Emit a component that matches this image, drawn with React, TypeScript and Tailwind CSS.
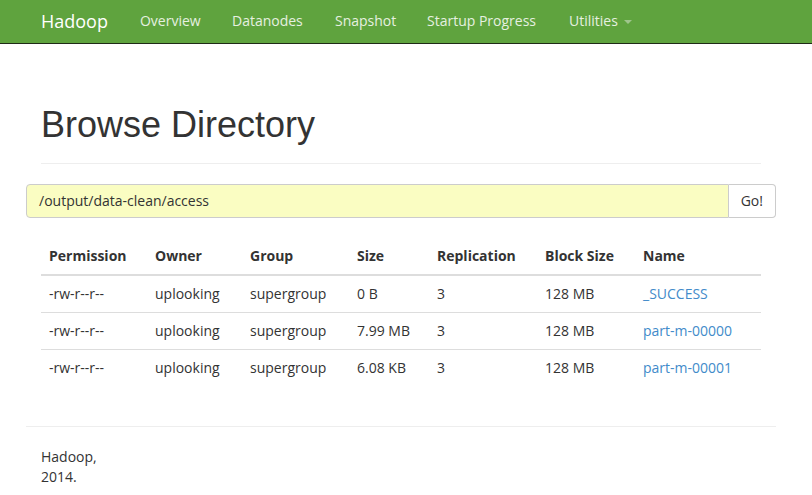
import React from 'react';

const rows = [
  { perm: '-rw-r--r--', owner: 'uplooking', group: 'supergroup', size: '0 B', repl: '3', block: '128 MB', name: '_SUCCESS' },
  { perm: '-rw-r--r--', owner: 'uplooking', group: 'supergroup', size: '7.99 MB', repl: '3', block: '128 MB', name: 'part-m-00000' },
  { perm: '-rw-r--r--', owner: 'uplooking', group: 'supergroup', size: '6.08 KB', repl: '3', block: '128 MB', name: 'part-m-00001' },
];

const headers = [
  { label: 'Permission', w: 'w-[106px]' },
  { label: 'Owner', w: 'w-[95px]' },
  { label: 'Group', w: 'w-[107px]' },
  { label: 'Size', w: 'w-[80px]' },
  { label: 'Replication', w: 'w-[108px]' },
  { label: 'Block Size', w: 'w-[98px]' },
  { label: 'Name', w: '' },
];

const navLinks = [
  { label: 'Overview', w: 'w-[92px]' },
  { label: 'Datanodes', w: 'w-[103px]' },
  { label: 'Snapshot', w: 'w-[92px]' },
  { label: 'Startup Progress', w: 'w-[142px]' },
];

export default function App() {
  return (
    <div className="min-h-[495px] bg-white text-[14px] leading-5 text-[#333] font-['Open_Sans',sans-serif]">
      {/* Navbar */}
      <nav className="h-[45px] bg-[#5fa33e] border-b border-[#1f2a17]">
        <div className="flex items-center h-[44px] px-[26px] -mt-[1px]">
          <a className="px-[15px] text-[18px] text-white">Hadoop</a>
          <ul className="flex items-center ml-[2px]">
            {navLinks.map((l) => (
              <li key={l.label} className={`${l.w} pl-[15px] text-[#e6f0e0]`}>{l.label}</li>
            ))}
            <li className="pl-[15px] text-[#e6f0e0] flex items-center">
              Utilities
              <span className="ml-[6px] mt-[2px] w-0 h-0 border-l-[4px] border-r-[4px] border-t-[4px] border-l-transparent border-r-transparent border-t-[#9fc58c]" />
            </li>
          </ul>
        </div>
      </nav>

      <div className="w-[750px] px-[15px] ml-[26px]">
        <div className="mt-[61px] pb-[18px] border-b border-[#eee]">
          <h1 className="font-['Liberation_Sans',Arial,sans-serif] text-[36px] leading-[40px] text-[#333]">Browse Directory</h1>
        </div>

        <div className="flex mt-[20px] -mx-[15px]">
          <div className="flex-1 h-[34px] px-[12px] flex items-center bg-[#fafdc2] border border-[#ccc] rounded-l-[4px] text-[#333]">
            /output/data-clean/access
          </div>
          <button className="h-[34px] px-[12px] border border-l-0 border-[#ccc] rounded-r-[4px] bg-white text-[#333]">Go!</button>
        </div>

        <table className="w-full mt-[20px] border-collapse">
          <thead>
            <tr className="border-b-2 border-[#ddd]">
              {headers.map((h) => (
                <th key={h.label} className={`${h.w} text-left font-bold px-[8px] py-[8px]`}>{h.label}</th>
              ))}
            </tr>
          </thead>
          <tbody>
            {rows.map((r, i) => (
              <tr key={r.name} className={i > 0 ? 'border-t border-[#ddd]' : ''}>
                <td className="px-[8px] py-[8px]">{r.perm}</td>
                <td className="px-[8px] py-[8px]">{r.owner}</td>
                <td className="px-[8px] py-[8px]">{r.group}</td>
                <td className="px-[8px] py-[8px]">{r.size}</td>
                <td className="px-[8px] py-[8px]">{r.repl}</td>
                <td className="px-[8px] py-[8px]">{r.block}</td>
                <td className="px-[8px] py-[8px] text-[#428bca]">{r.name}</td>
              </tr>
            ))}
          </tbody>
        </table>

        <div className="mt-[40px] -mx-[15px] border-t border-[#eee] pt-[20px] px-[15px]">
          <p>Hadoop,</p>
          <p>2014.</p>
        </div>
      </div>
    </div>
  );
}
